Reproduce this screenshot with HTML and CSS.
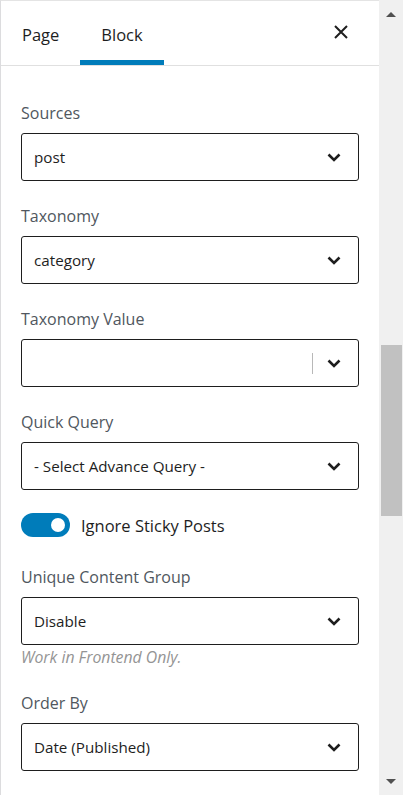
FILE: index.html
```html
<!DOCTYPE html>
<html>
<head>
<meta charset="utf-8">
<link rel="stylesheet" href="styles.css">
</head>
<body>
<div class="frame">
  <div class="panel">
    <div class="header">
      <div class="tabs">
        <button class="tab">Page</button>
        <button class="tab active">Block</button>
      </div>
      <button class="close" aria-label="Close">
        <svg width="14" height="14" viewBox="0 0 14 14"><path d="M1 1 L13 13 M13 1 L1 13" stroke="#1e1e1e" stroke-width="2" fill="none"/></svg>
      </button>
    </div>
    <div class="body">
      <div class="field">
        <div class="label">Sources</div>
        <div class="select"><span class="value">post</span><svg class="chev" width="14" height="9" viewBox="0 0 14 9"><polyline points="1.5,1.5 7,7 12.5,1.5" fill="none" stroke="#1e1e1e" stroke-width="2.6"/></svg></div>
      </div>
      <div class="field">
        <div class="label">Taxonomy</div>
        <div class="select"><span class="value">category</span><svg class="chev" width="14" height="9" viewBox="0 0 14 9"><polyline points="1.5,1.5 7,7 12.5,1.5" fill="none" stroke="#1e1e1e" stroke-width="2.6"/></svg></div>
      </div>
      <div class="field">
        <div class="label">Taxonomy Value</div>
        <div class="select"><span class="value"></span><span class="sep"></span><svg class="chev" width="14" height="9" viewBox="0 0 14 9"><polyline points="1.5,1.5 7,7 12.5,1.5" fill="none" stroke="#1e1e1e" stroke-width="2.6"/></svg></div>
      </div>
      <div class="field">
        <div class="label">Quick Query</div>
        <div class="select"><span class="value">- Select Advance Query -</span><svg class="chev" width="14" height="9" viewBox="0 0 14 9"><polyline points="1.5,1.5 7,7 12.5,1.5" fill="none" stroke="#1e1e1e" stroke-width="2.6"/></svg></div>
      </div>
      <div class="toggle-row">
        <span class="toggle"><span class="knob"></span></span>
        <span class="toggle-label">Ignore Sticky Posts</span>
      </div>
      <div class="field with-help">
        <div class="label">Unique Content Group</div>
        <div class="select"><span class="value">Disable</span><svg class="chev" width="14" height="9" viewBox="0 0 14 9"><polyline points="1.5,1.5 7,7 12.5,1.5" fill="none" stroke="#1e1e1e" stroke-width="2.6"/></svg></div>
        <div class="help">Work in Frontend Only.</div>
      </div>
      <div class="field">
        <div class="label">Order By</div>
        <div class="select"><span class="value">Date (Published)</span><svg class="chev" width="14" height="9" viewBox="0 0 14 9"><polyline points="1.5,1.5 7,7 12.5,1.5" fill="none" stroke="#1e1e1e" stroke-width="2.6"/></svg></div>
      </div>
    </div>
  </div>
  <div class="scrollbar">
    <div class="arrow up"></div>
    <div class="track"><div class="thumb"></div></div>
    <div class="arrow down"></div>
  </div>
</div>
</body>
</html>
```
FILE: styles.css
```css
html, body {
  margin: 0;
  padding: 0;
  height: 100%;
  overflow: hidden;
  background: #ffffff;
}
body {
  font-family: "Open Sans", "Noto Sans", sans-serif;
  color: #1e1e1e;
}
.frame {
  display: flex;
  height: 795px;
  width: 403px;
}
.panel {
  flex: 0 0 379px;
  box-sizing: border-box;
  border-left: 1px solid #dcdcde;
  border-top: 1px solid #e4e4e4;
  background: #fff;
  overflow: hidden;
}
.header {
  display: flex;
  align-items: stretch;
  justify-content: space-between;
  height: 64px;
  border-bottom: 1px solid #e0e0e0;
}
.tabs {
  display: flex;
}
.tab {
  background: none;
  border: 0;
  margin: 0;
  padding: 2px 21px 0;
  font-family: inherit;
  font-size: 16.5px;
  font-weight: 500;
  color: #1e1e1e;
  cursor: pointer;
}
.tab.active {
  box-shadow: inset 0 -5px 0 #007cba;
}
.close {
  background: none;
  border: 0;
  width: 44px;
  padding: 0 0 3px;
  margin-right: 16px;
  display: flex;
  align-items: center;
  justify-content: center;
}
.body {
  padding: 35px 20px 0 20px;
}
.field {
  margin-bottom: 23px;
}
.field.with-help {
  margin-bottom: 24px;
}
.label {
  font-size: 16px;
  line-height: 24px;
  color: #50575e;
  margin-bottom: 8px;
}
.select {
  box-sizing: border-box;
  height: 48px;
  border: 1px solid #1e1e1e;
  border-radius: 3px;
  display: flex;
  align-items: center;
  padding: 0 17px 0 12px;
}
.value {
  flex: 1;
  font-size: 15.2px;
  color: #1e1e1e;
}
.sep {
  width: 1px;
  height: 21px;
  background: #b8b8b8;
  margin-right: 14px;
}
.chev {
  flex: 0 0 auto;
  display: block;
}
.toggle-row {
  display: flex;
  align-items: center;
  height: 24px;
  gap: 11px;
  margin-bottom: 28px;
}
.toggle {
  box-sizing: border-box;
  width: 49px;
  height: 24px;
  border-radius: 12px;
  background: #007cba;
  display: flex;
  align-items: center;
  justify-content: flex-end;
  padding-right: 5px;
}
.knob {
  width: 14px;
  height: 14px;
  border-radius: 50%;
  background: #fff;
}
.toggle-label {
  font-size: 16.5px;
  color: #1e1e1e;
}
.help {
  margin-top: 2px;
  font-size: 15.8px;
  line-height: 20px;
  font-style: italic;
  color: #949494;
}
.scrollbar {
  flex: 0 0 24px;
  background: #f0f0f0;
  display: flex;
  flex-direction: column;
}
.arrow {
  height: 28px;
  display: flex;
  justify-content: center;
  align-items: center;
}
.arrow.up::before {
  content: "";
  border-left: 5px solid transparent;
  border-right: 5px solid transparent;
  border-bottom: 5px solid #505050;
}
.arrow.down::before {
  content: "";
  border-left: 5px solid transparent;
  border-right: 5px solid transparent;
  border-top: 5px solid #505050;
}
.track {
  flex: 1;
  padding-top: 317px;
  padding-left: 2px;
  padding-right: 1px;
}
.thumb {
  height: 171px;
  background: #c1c1c1;
}
```
